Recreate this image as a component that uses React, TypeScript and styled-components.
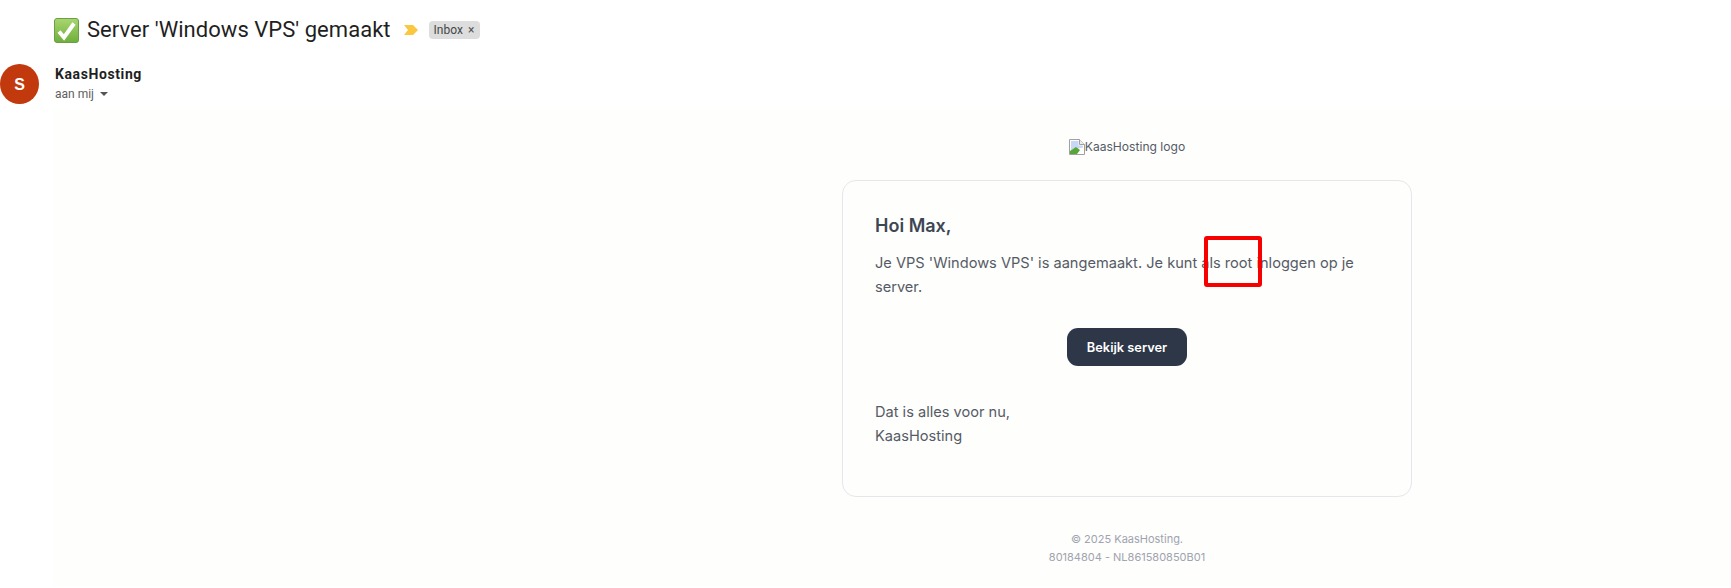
import React from "react";
import styled, { createGlobalStyle } from "styled-components";

const GlobalStyle = createGlobalStyle`
  html, body {
    margin: 0;
    padding: 0;
    background: #ffffff;
    overflow: hidden;
  }
  body {
    font-family: "Inter", "Liberation Sans", sans-serif;
  }
`;

const Page = styled.div`
  width: 1731px;
  height: 588px;
  display: flex;
  flex-direction: column;
`;

const SubjectRow = styled.div`
  height: 60px;
  padding-left: 54px;
  display: flex;
  align-items: center;
  box-sizing: border-box;
`;

const Subject = styled.h1`
  margin: 0 0 0 8px;
  font: 400 22px/28px Roboto, "Liberation Sans", sans-serif;
  letter-spacing: 0.04px;
  color: #1f1f1f;
  white-space: nowrap;
`;

const InboxChip = styled.span`
  margin-left: 11px;
  height: 18px;
  width: 51px;
  box-sizing: border-box;
  padding-left: 5px;
  display: flex;
  align-items: center;
  gap: 5px;
  border-radius: 4px;
  background: #dddddd;
  color: #444746;
  font: 400 12px/18px Roboto, "Liberation Sans", sans-serif;
`;

const ChipClose = styled.span`
  font-size: 12px;
  line-height: 18px;
  color: #555555;
`;

const SenderRow = styled.div`
  height: 50px;
  display: flex;
  align-items: flex-start;
`;

const Avatar = styled.div`
  width: 39px;
  height: 40px;
  margin-top: 4px;
  padding-top: 1px;
  box-sizing: border-box;
  border-radius: 50%;
  background: #c1390d;
  color: #ffffff;
  display: flex;
  align-items: center;
  justify-content: center;
  font: 700 16px "Liberation Sans", sans-serif;
`;

const SenderInfo = styled.div`
  margin-left: 16px;
  padding-top: 4px;
`;

const SenderName = styled.div`
  font: 700 14px/20px Roboto, "Liberation Sans", sans-serif;
  letter-spacing: 0.6px;
  color: #1f1f1f;
`;

const Recipient = styled.div`
  margin-top: 1px;
  display: flex;
  align-items: center;
  gap: 6px;
  font: 400 12px/18px Roboto, "Liberation Sans", sans-serif;
  color: #5e5e5e;
`;

const Caret = styled.span`
  width: 0;
  height: 0;
  border-left: 4px solid transparent;
  border-right: 4px solid transparent;
  border-top: 4px solid #555555;
`;

const MailBody = styled.main`
  flex: 1;
  margin-top: -1px;
  margin-left: 53px;
  margin-bottom: 2px;
  background: #fefefc;
  padding-left: 789px;
`;

const Column = styled.div`
  width: 570px;
  display: flex;
  flex-direction: column;
  align-items: center;
`;

const LogoAlt = styled.div`
  margin-top: 30px;
  height: 16px;
  display: flex;
  align-items: center;
  font-size: 12.1px;
  line-height: 16px;
  color: #555b66;
`;

const Card = styled.section`
  position: relative;
  width: 100%;
  height: 317px;
  margin-top: 25px;
  box-sizing: border-box;
  padding: 33px 32px 0;
  background: #fefefc;
  border: 1px solid #e5e7eb;
  border-radius: 14px;
`;

const Greeting = styled.h2`
  margin: 0;
  font-size: 18px;
  line-height: 24px;
  font-weight: 600;
  color: #3d4654;
`;

const Paragraph = styled.p`
  margin: 13px 0 0;
  font-size: 14.6px;
  line-height: 24px;
  color: #555b66;
`;

const ButtonRow = styled.div`
  margin-top: 29px;
  display: flex;
  justify-content: center;
`;

const ViewButton = styled.a`
  width: 120px;
  height: 38px;
  border-radius: 11px;
  background: #2d3748;
  color: #ffffff;
  display: flex;
  align-items: center;
  justify-content: center;
  font-size: 12.8px;
  font-weight: 600;
`;

const SignOff = styled(Paragraph)`
  margin-top: 34px;
`;

const Highlight = styled.div`
  position: absolute;
  left: 361px;
  top: 55px;
  width: 58px;
  height: 51px;
  box-sizing: border-box;
  border: 4px solid #f70000;
  border-radius: 3px;
`;

const Footer = styled.footer`
  margin-top: 33px;
  text-align: center;
  font-size: 11px;
  line-height: 18px;
  color: #a0a3b0;
`;

const CheckIcon = () => (
  <svg width="25" height="25" viewBox="0 0 25 25">
    <defs>
      <linearGradient id="checkFill" x1="0" y1="0" x2="0" y2="1">
        <stop offset="0" stopColor="#a9d66f" />
        <stop offset="1" stopColor="#6fae3c" />
      </linearGradient>
    </defs>
    <rect x="0.5" y="0.5" width="24" height="24" rx="2.5" fill="url(#checkFill)" stroke="#6a9f45" />
    <path d="M5 13.5l5 6L20 5.5" fill="none" stroke="#ffffff" strokeWidth="4" />
  </svg>
);

const ImportanceIcon = () => (
  <svg width="14" height="10" viewBox="0 0 14 10" style={{ marginLeft: 13 }}>
    <path d="M0 0h9l5 5-5 5H0l4-5z" fill="#f9c740" />
  </svg>
);

const BrokenImageIcon = () => (
  <svg width="16" height="16" viewBox="0 0 16 16">
    <path d="M.5.5h10l5 5v10H.5z" fill="#ffffff" stroke="#a0a0a0" />
    <path d="M2 2h7.5v4.5H14v2L2 11z" fill="#c6d8f6" />
    <path d="M1 15v-3l6-4 4 3-3 4z" fill="#58a63a" />
    <path d="M10.5.5v5h5" fill="#eeeeee" stroke="#a0a0a0" />
  </svg>
);

const App = () => (
  <Page>
    <GlobalStyle />
    <SubjectRow>
      <CheckIcon />
      <Subject>Server 'Windows VPS' gemaakt</Subject>
      <ImportanceIcon />
      <InboxChip>
        Inbox<ChipClose>×</ChipClose>
      </InboxChip>
    </SubjectRow>
    <SenderRow>
      <Avatar>S</Avatar>
      <SenderInfo>
        <SenderName>KaasHosting</SenderName>
        <Recipient>
          aan mij <Caret />
        </Recipient>
      </SenderInfo>
    </SenderRow>
    <MailBody>
      <Column>
        <LogoAlt>
          <BrokenImageIcon />
          KaasHosting logo
        </LogoAlt>
        <Card>
          <Greeting>Hoi Max,</Greeting>
          <Paragraph>
            Je VPS 'Windows VPS' is aangemaakt. Je kunt als root inloggen op je server.
          </Paragraph>
          <ButtonRow>
            <ViewButton>Bekijk server</ViewButton>
          </ButtonRow>
          <SignOff>
            Dat is alles voor nu,
            <br />
            KaasHosting
          </SignOff>
          <Highlight />
        </Card>
        <Footer>
          © 2025 KaasHosting.
          <br />
          80184804 - NL861580850B01
        </Footer>
      </Column>
    </MailBody>
  </Page>
);

export default App;
